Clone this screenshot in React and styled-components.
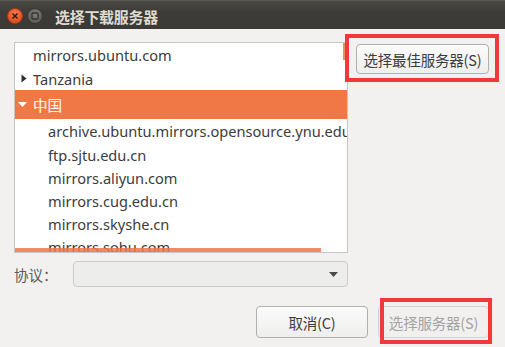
import styled, { createGlobalStyle } from 'styled-components';

const GlobalStyle = createGlobalStyle`
  html, body {
    margin: 0;
    padding: 0;
    background: #f2f1f0;
  }
  body {
    font-family: "Noto Sans", "Noto Sans CJK SC", sans-serif;
    color: #3c3c3c;
  }
`;

const Window = styled.div`
  width: 505px;
  height: 347px;
  display: flex;
  flex-direction: column;
  overflow: hidden;
  background: #f2f1f0;
`;

const TitleBar = styled.div`
  height: 29px;
  flex: none;
  display: flex;
  align-items: center;
  padding-left: 7px;
  gap: 4px;
  background: linear-gradient(#4a4944, #3c3b37 40%, #3b3a36);
  border-top: 1px solid #5a5955;
  box-sizing: border-box;
`;

const WinButton = styled.div`
  width: 16px;
  height: 16px;
  border-radius: 50%;
  box-sizing: border-box;
  display: flex;
  align-items: center;
  justify-content: center;
  margin-top: 2px;
  background: ${p => p.$close
    ? 'radial-gradient(circle at 50% 35%, #f77c50, #e3501f 70%)'
    : 'radial-gradient(circle at 50% 35%, #7f7e79, #5f5e5a 70%)'};
  border: 1px solid ${p => p.$close ? '#a8391a' : '#373632'};
`;

const Title = styled.div`
  margin-left: 8px;
  margin-top: 2px;
  font-family: "Noto Sans CJK SC", sans-serif;
  font-size: 15px;
  font-weight: 700;
  color: #dfdbd2;
  letter-spacing: -0.3px;
`;

const Body = styled.div`
  flex: 1;
  display: flex;
  flex-direction: column;
  padding: 13px 16px 0 14px;
`;

const TopRow = styled.div`
  display: flex;
  align-items: flex-start;
  gap: 8px;
`;

const ListFrame = styled.div`
  position: relative;
  width: 334px;
  height: 211px;
  box-sizing: border-box;
  border: 1px solid #c9c7c4;
  background: #ffffff;
  overflow: hidden;
`;

const Row = styled.div`
  height: ${p => p.$h}px;
  display: flex;
  align-items: center;
  padding-left: ${p => p.$indent}px;
  white-space: nowrap;
  font-size: 14.6px;
  color: ${p => p.$selected ? '#ffffff' : '#3c3c3c'};
  background: ${p => p.$selected ? '#f07746' : 'transparent'};
`;

const Expander = styled.svg`
  width: ${p => p.$w}px;
  height: 9px;
  flex: none;
  margin-left: ${p => p.$left}px;
  margin-right: ${p => p.$right}px;
`;

const CjkText = styled.span`
  font-family: "Noto Sans CJK SC", sans-serif;
  font-size: 14.6px;
`;

const VScroll = styled.div`
  position: absolute;
  top: 0;
  right: 1px;
  width: 3px;
  height: 17px;
  background: #f08a5f;
`;

const HScroll = styled.div`
  position: absolute;
  left: 0;
  bottom: 0;
  width: 306px;
  height: 4px;
  background: rgba(240, 119, 70, 0.85);
`;

const Highlight = styled.div`
  position: relative;
  margin-top: ${p => p.$top || 0}px;

  &::after {
    content: '';
    position: absolute;
    top: ${p => p.$box[0]}px;
    right: ${p => p.$box[1]}px;
    bottom: ${p => p.$box[2]}px;
    left: ${p => p.$box[3]}px;
    border: 4px solid #f3383a;
    pointer-events: none;
  }
`;

const Button = styled.button`
  box-sizing: border-box;
  width: ${p => p.$w}px;
  height: ${p => p.$h}px;
  padding: 0;
  border-radius: 4px;
  border: 1px solid ${p => p.disabled ? '#d3d1ce' : '#b2b0ad'};
  background: ${p => p.disabled
    ? '#f1f0ef'
    : 'linear-gradient(#fbfbfb, #eeeeed)'};
  box-shadow: ${p => p.disabled ? 'none' : 'inset 0 1px 0 #ffffff'};
  font-family: "Noto Sans CJK SC", "Noto Sans", sans-serif;
  font-size: 14.5px;
  color: ${p => p.disabled ? '#a3a3a3' : '#3c3c3c'};
  letter-spacing: -0.2px;
`;

const ProtocolRow = styled.div`
  display: flex;
  align-items: center;
  margin-top: 8px;
`;

const FieldLabel = styled.span`
  width: 59px;
  font-family: "Noto Sans CJK SC", sans-serif;
  font-size: 14.5px;
  color: #5c5c5c;
`;

const Combo = styled.div`
  box-sizing: border-box;
  width: 275px;
  height: 26px;
  border: 1px solid #cdcbc8;
  border-radius: 4px;
  background: #ededec;
  display: flex;
  align-items: center;
  justify-content: flex-end;
  padding-right: 9px;
`;

const ButtonRow = styled.div`
  display: flex;
  justify-content: flex-end;
  gap: 10px;
  margin-top: 19px;
`;

const children = [
  'archive.ubuntu.mirrors.opensource.ynu.edu.cn',
  'ftp.sjtu.edu.cn',
  'mirrors.aliyun.com',
  'mirrors.cug.edu.cn',
  'mirrors.skyshe.cn',
  'mirrors.sohu.com',
];

export default function App() {
  return (
    <>
      <GlobalStyle />
      <Window>
        <TitleBar>
          <WinButton $close>
            <svg width="8" height="8" viewBox="0 0 8 8">
              <path d="M1.5 1.5 L6.5 6.5 M6.5 1.5 L1.5 6.5" stroke="#3a1a0c" strokeWidth="1.6" />
            </svg>
          </WinButton>
          <WinButton>
            <svg width="8" height="8" viewBox="0 0 8 8">
              <rect x="1" y="1" width="6" height="6" rx="1" fill="none" stroke="#34332f" strokeWidth="1.4" />
            </svg>
          </WinButton>
          <Title>选择下载服务器</Title>
        </TitleBar>

        <Body>
          <TopRow>
            <ListFrame>
              <Row $h={24} $indent={18}>mirrors.ubuntu.com</Row>
              <Row $h={23} $indent={0}>
                <Expander $w={6} $left={6} $right={6} viewBox="0 0 6 9">
                  <polygon points="0.5,0.5 5.5,4.5 0.5,8.5" fill="#2e2e2e" />
                </Expander>
                Tanzania
              </Row>
              <Row $h={29} $indent={0} $selected>
                <Expander $w={9} $left={3} $right={6} viewBox="0 0 9 9">
                  <polygon points="0,2 9,2 4.5,7" fill="#ffffff" />
                </Expander>
                <CjkText>中国</CjkText>
              </Row>
              {children.map((name, i) => (
                <Row key={name} $h={i === 0 ? 24 : 23} $indent={33}>{name}</Row>
              ))}
              <VScroll />
              <HScroll />
            </ListFrame>

            <Highlight $top={2} $box={[-10, -10, -8, -11]}>
              <Button $w={133} $h={30}>选择最佳服务器(S)</Button>
            </Highlight>
          </TopRow>

          <ProtocolRow>
            <FieldLabel>协议：</FieldLabel>
            <Combo>
              <svg width="9" height="5" viewBox="0 0 9 5">
                <polygon points="0,0 9,0 4.5,5" fill="#4a4a4a" />
              </svg>
            </Combo>
          </ProtocolRow>

          <ButtonRow>
            <Button $w={112} $h={32}>取消(C)</Button>
            <Highlight $box={[-8, -3, -6, 2]}>
              <Button $w={111} $h={32} disabled>选择服务器(S)</Button>
            </Highlight>
          </ButtonRow>
        </Body>
      </Window>
    </>
  );
}
